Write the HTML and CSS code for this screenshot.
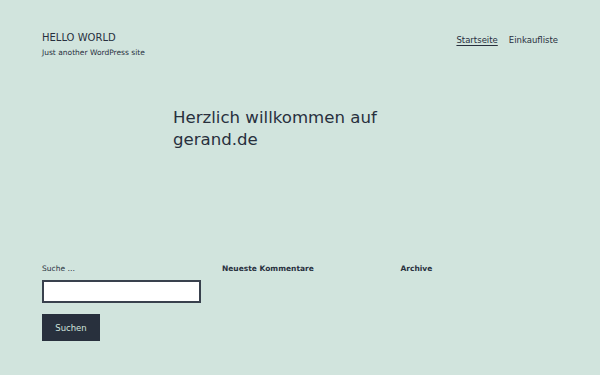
FILE: index.html
```html
<!DOCTYPE html>
<html lang="de">

<head>
  <meta charset="UTF-8">
  <meta name="viewport" content="width=device-width, initial-scale=1.0">
  <title>HELLO WORLD</title>
  <link rel="stylesheet" href="styles.css">
</head>

<body>
  <header class="site-header">
    <div class="branding">
      <p class="site-title">HELLO WORLD</p>
      <p class="site-description">Just another WordPress site</p>
    </div>
    <nav class="primary-nav">
      <a href="#" class="current">Startseite</a>
      <a href="#">Einkaufliste</a>
    </nav>
  </header>

  <main class="site-main">
    <h1 class="entry-title">Herzlich willkommen auf gerand.de</h1>
  </main>

  <footer class="widget-area">
    <section class="widget">
      <form class="search-form">
        <label for="s" class="search-label">Suche …</label>
        <input type="search" id="s" class="search-field">
        <button type="submit" class="search-submit">Suchen</button>
      </form>
    </section>
    <section class="widget">
      <h2 class="widget-title">Neueste Kommentare</h2>
    </section>
    <section class="widget">
      <h2 class="widget-title">Archive</h2>
    </section>
  </footer>
</body>

</html>
```

FILE: styles.css
```css
/* Base */
body {
  margin: 0;
  font-family: "DejaVu Sans", sans-serif;
  background-color: #d1e4dd;
  color: #28303d;
}

a {
  color: #28303d;
  text-decoration: none;
}

/* Header */
.site-header {
  display: flex;
  justify-content: space-between;
  align-items: flex-start;
  padding: 31px 42px 0;
}

.site-title {
  margin: 0;
  font-size: 10px;
  line-height: 14px;
}

.site-description {
  margin: 3px 0 0;
  font-size: 7.5px;
  line-height: 10px;
}

.primary-nav {
  display: flex;
  gap: 11px;
  padding-top: 3px;
  font-size: 8.5px;
  line-height: 12px;
}

.primary-nav .current {
  text-decoration: underline;
  text-underline-offset: 2px;
}

/* Main */
.site-main {
  width: 254px;
  margin: 0 auto;
  padding-top: 49px;
  height: 157px;
}

.entry-title {
  margin: 0;
  font-weight: normal;
  font-size: 16.6px;
  line-height: 22px;
}

/* Footer widgets */
.widget-area {
  display: grid;
  grid-template-columns: repeat(3, 1fr);
  gap: 21px;
  padding: 0 42px;
}

.widget-title {
  margin: 0;
  font-size: 7.5px;
  line-height: 10px;
  font-weight: bold;
}

.search-form {
  display: flex;
  flex-direction: column;
  align-items: flex-start;
}

.search-label {
  font-size: 7.5px;
  line-height: 10px;
}

.search-field {
  box-sizing: border-box;
  width: 159px;
  height: 23px;
  margin: 6px 0 0;
  border: 2px solid #39414d;
  background: #fff;
}

.search-submit {
  margin-top: 11px;
  width: 58px;
  height: 27px;
  border: none;
  background-color: #28303d;
  color: #d1e4dd;
  font-family: "DejaVu Sans", sans-serif;
  font-size: 8.5px;
}
```
